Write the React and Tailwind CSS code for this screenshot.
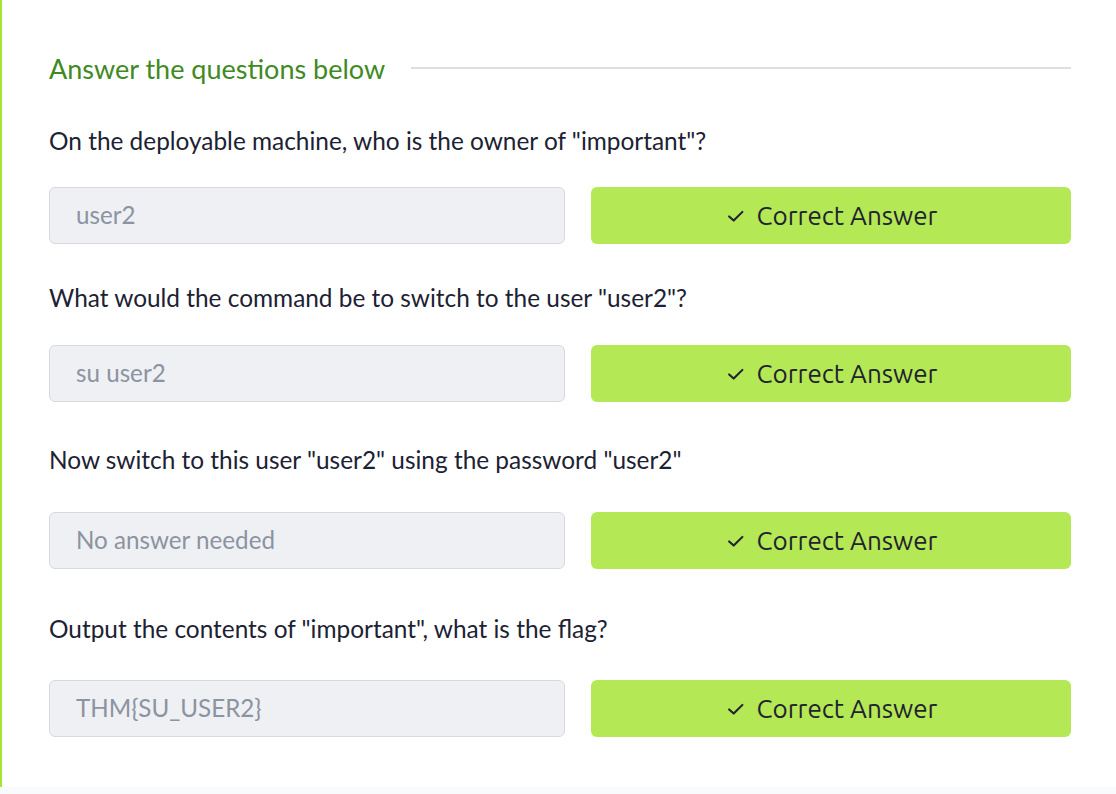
const QUESTIONS = [
  { q: 'On the deployable machine, who is the owner of "important"?', a: "user2", mt: "mt-[38px]", gap: "mt-[31px]" },
  { q: 'What would the command be to switch to the user "user2"?', a: "su user2", mt: "mt-[39px]", gap: "mt-[32px]" },
  { q: 'Now switch to this user "user2" using the password "user2"', a: "No answer needed", mt: "mt-[43px]", gap: "mt-[37px]" },
  { q: 'Output the contents of "important", what is the flag?', a: "THM{SU_USER2}", mt: "mt-[45px]", gap: "mt-[36px]" },
];

function Check() {
  return (
    <svg viewBox="0 0 24 24" width="22" height="22" fill="none" stroke="#1f2330" strokeWidth="2.3" strokeLinecap="round" strokeLinejoin="round">
      <polyline points="4.5 12.5 9.5 17 19 7.5" />
    </svg>
  );
}

export default function App() {
  return (
    <div className="w-[1116px] h-[794px] bg-[#f9fafb] flex flex-col" style={{ fontFamily: "Lato, 'Noto Sans', sans-serif" }}>
      <div className="h-[787px] bg-white border-l-2 border-[#a3e635] pl-[47px] pr-[45px] pt-[48px]">
        {/* Heading */}
        <div className="flex items-center gap-[26px] h-[40px]">
          <h2 className="text-[27px] text-[#3f8a23] leading-none whitespace-nowrap">Answer the questions below</h2>
          <div className="flex-1 h-[2px] bg-[#dcdfe4]" />
        </div>

        {QUESTIONS.map((item) => (
          <div key={item.q} className={item.mt}>
            <p className="text-[24.4px] text-[#1c2233] leading-[30px] h-[30px] whitespace-nowrap">{item.q}</p>
            <div className={`${item.gap} flex gap-[26px]`}>
              <div className="w-[516px] h-[57px] rounded-[6px] bg-[#eef0f3] border border-[#d6dae0] flex items-center px-[26px] text-[24.2px] text-[#8c93a1]">
                {item.a}
              </div>
              <button className="flex-1 h-[57px] rounded-[6px] bg-[#b4e854] flex items-center justify-center gap-[10px] text-[26px] text-[#1f2330]" style={{ fontFamily: "Ubuntu, 'Noto Sans', sans-serif" }}>
                <Check />
                <span>Correct Answer</span>
              </button>
            </div>
          </div>
        ))}
      </div>
    </div>
  );
}
